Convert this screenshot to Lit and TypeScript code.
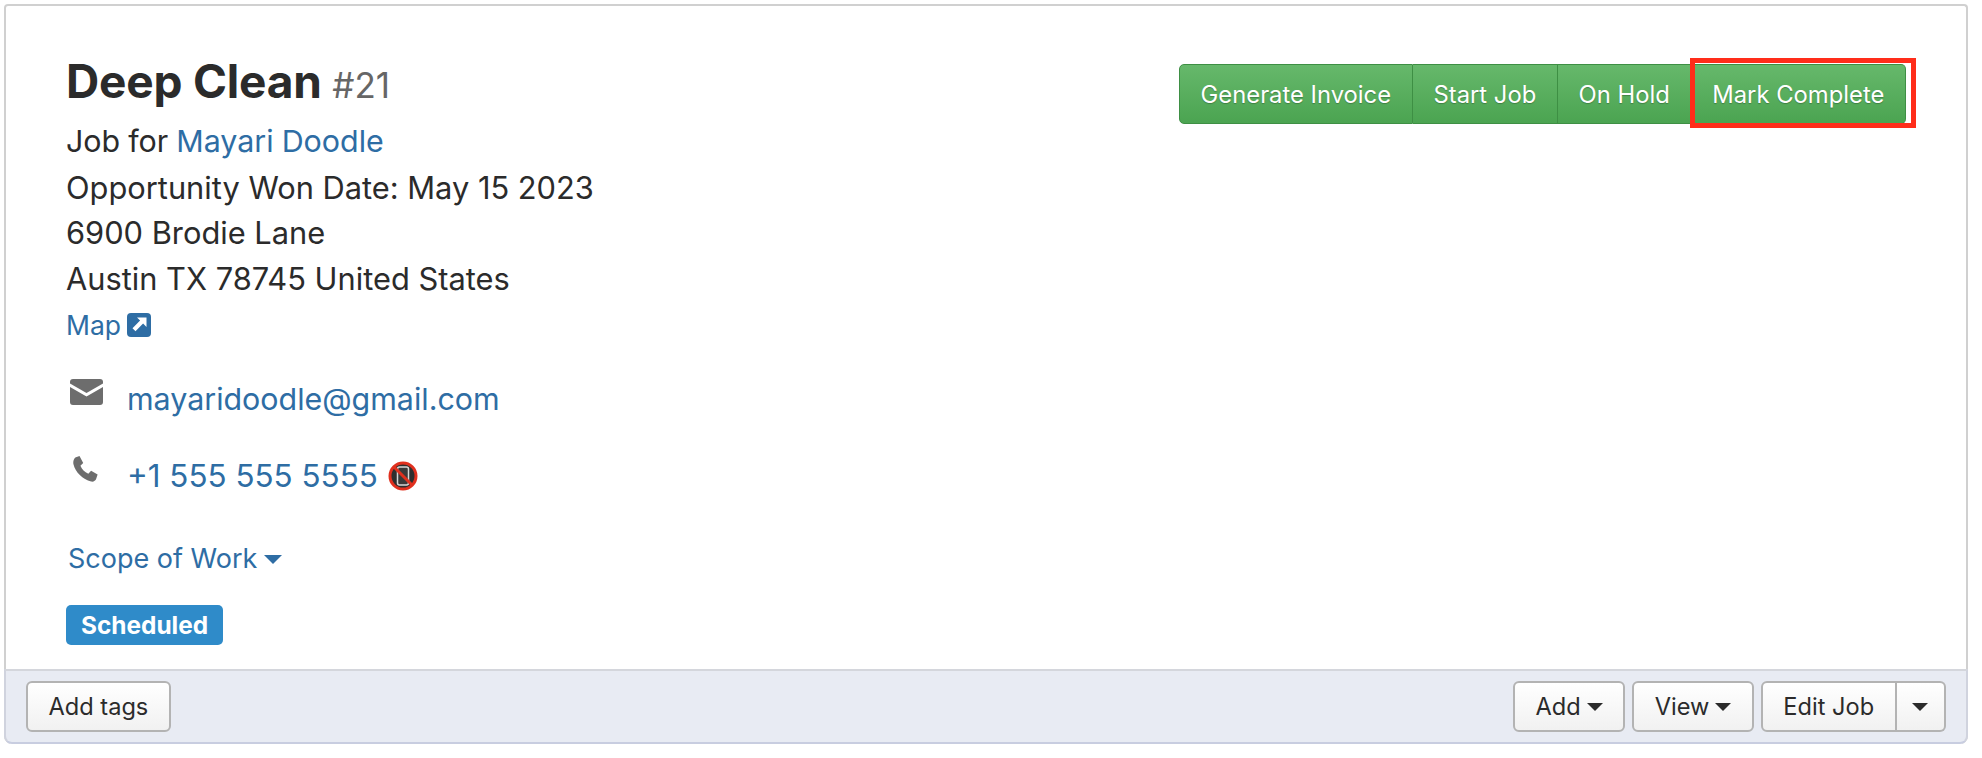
import { html, css, LitElement, svg } from "lit";
import { customElement } from "lit/decorators.js";

const caret = svg`<path d="M0 0h12L6 6z" fill="currentColor"/>`;

@customElement("app-root")
export class AppRoot extends LitElement {
  static styles = css`
    :host {
      display: block;
      font-family: Inter, "Liberation Sans", sans-serif;
      color: #2b2b2b;
      padding: 4px 14px 0 4px;
    }
    * {
      box-sizing: border-box;
    }
    a {
      color: #2e6da4;
      text-decoration: none;
    }
    .card {
      border: 2px solid #d0d0d0;
      border-bottom: none;
      border-radius: 4px 4px 8px 8px;
      background: #fff;
    }
    .body {
      display: flex;
      justify-content: space-between;
      align-items: flex-start;
      height: 663px;
      padding: 42px 60px 0 60px;
    }
    h1 {
      margin: 0;
      font-size: 46px;
      line-height: 67px;
      font-weight: 700;
      letter-spacing: -0.2px;
    }
    h1 small {
      font-size: 35px;
      font-weight: 400;
      color: #666;
      letter-spacing: 0;
    }
    .line {
      font-size: 30.800px;
      line-height: 45.500px;
    }
    .job {
      font-size: 30.400px;
      word-spacing: -0.5px;
    }
    .map {
      display: flex;
      align-items: center;
      gap: 6px;
      margin-top: 4px;
      font-size: 26.500px;
      line-height: 40px;
    }
    .contact {
      display: flex;
      align-items: flex-start;
      font-size: 30.400px;
      line-height: 40px;
      margin-left: 3px;
    }
    .contact .ico {
      display: flex;
      width: 58px;
      flex: none;
    }
    .mail-ico {
      margin-left: 1px;
    }
    .phone-ico {
      margin-left: 4px;
    }
    .email {
      margin-top: 34px;
    }
    .phone {
      margin-top: 37px;
      font-size: 31.400px;
    }
    .phone a {
      display: flex;
      align-items: center;
      gap: 10px;
    }
    .scope {
      display: inline-flex;
      align-items: center;
      gap: 7px;
      margin: 43px 0 0 2px;
      font-size: 27px;
      line-height: 40px;
    }
    .badge {
      display: block;
      width: fit-content;
      margin-top: 26px;
      padding: 0 15px;
      border-radius: 5px;
      background: #2f8bc9;
      color: #fff;
      font-size: 24.400px;
      font-weight: 700;
      line-height: 40px;
    }
    .actions {
      display: flex;
      margin-top: 16px;
    }
    .actions button {
      position: relative;
      height: 60px;
      padding: 0 20.700px;
      border: 1px solid #3e8f44;
      border-left: none;
      background: linear-gradient(#66b86b, #4ba451);
      color: #fff;
      font: 400 23.800px Inter, "Liberation Sans", sans-serif;
      text-shadow: 0 1px 1px rgba(0, 0, 0, 0.25);
      white-space: nowrap;
    }
    .actions button:first-child {
      border-left: 1px solid #3e8f44;
      border-radius: 5px 0 0 5px;
    }
    .actions button:last-child {
      border-radius: 0 5px 5px 0;
    }
    .marker {
      position: absolute;
      top: -7px;
      right: -11px;
      bottom: -5px;
      left: -2px;
      border: 5px solid #ff2d1a;
      pointer-events: none;
    }
    .footer {
      display: flex;
      justify-content: space-between;
      align-items: center;
      height: 75px;
      padding: 0 20px 0 20px;
      border-top: 2px solid #d4d6dc;
      border-bottom: 2px solid #c8cde0;
      border-radius: 0 0 8px 8px;
      background: #e8ebf3;
      margin: 0 -2px;
      border-left: 2px solid #d0d3de;
      border-right: 2px solid #d0d3de;
    }
    .tools {
      display: flex;
      gap: 7px;
    }
    .btn {
      display: flex;
      align-items: center;
      gap: 6px;
      height: 51px;
      padding: 0 20.500px;
      border: 2px solid #b3b3b3;
      border-radius: 6px;
      background: linear-gradient(#fff, #f1f1f1);
      color: #2b2b2b;
      font: 400 23.600px Inter, "Liberation Sans", sans-serif;
    }
    .split {
      display: flex;
    }
    .split .btn:first-child {
      border-radius: 6px 0 0 6px;
    }
    .split .btn:last-child {
      border-left: none;
      border-radius: 0 6px 6px 0;
      padding: 0 15.700px;
    }
  `;

  render() {
    return html`
      <div class="card">
        <div class="body">
          <div>
            <h1>Deep Clean <small>#21</small></h1>
            <div class="line job">Job for <a href="#">Mayari Doodle</a></div>
            <div class="line">Opportunity Won Date: May 15 2023</div>
            <div class="line">6900 Brodie Lane</div>
            <div class="line">Austin TX 78745 United States</div>
            <a class="map" href="#">Map
              <svg width="24" height="24" viewBox="0 0 24 24">
                <rect width="24" height="24" rx="4" fill="#2e6da4"/>
                <path d="M10 4.500h9.500V14l-3.400-3.400-7.600 7.600-3-3 7.600-7.600z" fill="#fff"/>
              </svg>
            </a>
            <div class="contact email">
              <span class="ico">
                <svg class="mail-ico" width="33" height="26" viewBox="0 0 33 26">
                  <path d="M3 0h27a3 3 0 0 1 3 3v1.500L16.500 14 0 4.500V3a3 3 0 0 1 3-3z" fill="#6d6d6d"/>
                  <path d="M0 8l16.500 9.500L33 8v15a3 3 0 0 1-3 3H3a3 3 0 0 1-3-3z" fill="#6d6d6d"/>
                </svg>
              </span>
              <a href="#">mayaridoodle@gmail.com</a>
            </div>
            <div class="contact phone">
              <span class="ico">
                <svg class="phone-ico" width="26" height="26" viewBox="2 0 27 28">
                  <path d="M4 1.500 8.500 0l4 7.500L9.500 10.500c1.500 4 4.500 7 8.500 8.500l3-3 7 4-1.500 4.500c-.8 2.300-3 3.500-5.500 3C12 25.500 4 17.500 2 9c-.6-3 .2-6 2-7.500z" fill="#6d6d6d"/>
                </svg>
              </span>
              <a href="#">+1 555 555 5555
                <svg width="30" height="30" viewBox="0 0 30 30">
                  <circle cx="15" cy="15" r="13" fill="#2f2f2f" stroke="#e0301e" stroke-width="3"/>
                  <rect x="9.500" y="6" width="11" height="18" rx="2" fill="#3a3a3a" stroke="#d8d8d8" stroke-width="1.500"/>
                  <path d="M6 6l18 18" stroke="#e0301e" stroke-width="3"/>
                </svg>
              </a>
            </div>
            <a class="scope" href="#">Scope of Work
              <svg width="18" height="9" viewBox="0 0 12 6">${caret}</svg>
            </a>
            <span class="badge">Scheduled</span>
          </div>
          <div class="actions">
            <button>Generate Invoice</button>
            <button>Start Job</button>
            <button>On Hold</button>
            <button>Mark Complete<span class="marker"></span></button>
          </div>
        </div>
        <div class="footer">
          <button class="btn">Add tags</button>
          <div class="tools">
            <button class="btn">Add <svg width="16" height="8" viewBox="0 0 12 6">${caret}</svg></button>
            <button class="btn">View <svg width="16" height="8" viewBox="0 0 12 6">${caret}</svg></button>
            <div class="split">
              <button class="btn">Edit Job</button>
              <button class="btn"><svg width="16" height="8" viewBox="0 0 12 6">${caret}</svg></button>
            </div>
          </div>
        </div>
      </div>
    `;
  }
}
